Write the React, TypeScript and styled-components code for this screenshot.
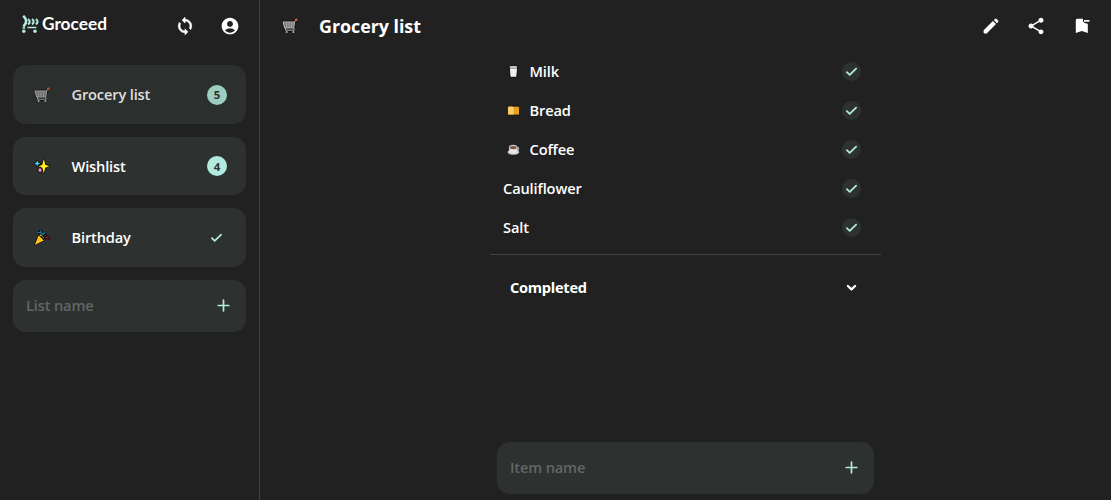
import React from 'react'
import styled, { createGlobalStyle } from 'styled-components'
import { MdAccountCircle, MdShare } from 'react-icons/md'

interface ListEntry {
  key: string
  text: string
  icon: React.ReactNode
  count?: number
  active?: boolean
}

interface ItemEntry {
  key: string
  text: string
  icon?: React.ReactNode
}

const mint = '#b2ebde'
const surface = '#2d3230'

const GlobalStyle = createGlobalStyle`
  * {
    box-sizing: border-box;
  }

  body {
    margin: 0;
    background: #212121;
    color: #fff;
    font-family: 'Open Sans', 'Noto Sans', sans-serif;
    font-size: 14.625px;
    font-weight: 600;
    overflow: hidden;
  }

  svg {
    display: block;
    flex-shrink: 0;
  }
`

const Page = styled.div`
  display: flex;
  height: 100vh;
`

const Sidebar = styled.aside`
  width: 260px;
  flex-shrink: 0;
  border-right: 1px solid #424242;
`

const SideHeader = styled.header`
  display: flex;
  align-items: center;
  height: 52px;
  padding: 0 19px 0 22px;
`

const Logo = styled.div`
  display: flex;
  align-items: center;
  flex: 1;
  gap: 3px;
  padding-bottom: 4px;
`

const LogoText = styled.span`
  font-family: Lato, sans-serif;
  font-size: 17.3px;
  font-weight: 700;
  line-height: 22px;
`

const Actions = styled.div`
  display: flex;
  align-items: center;
  gap: 25.5px;
`

const IconButton = styled.button`
  display: flex;
  padding: 0;
  border: 0;
  background: none;
  color: #fff;
  font-size: 20px;
`

const SideContent = styled.nav`
  display: flex;
  flex-direction: column;
  gap: 13px;
  padding: 13.3px 13px;
`

const ListCard = styled.div<{ $active?: boolean }>`
  display: flex;
  align-items: center;
  height: 58.5px;
  padding: 0 19px 0 21px;
  border-radius: 13px;
  background: ${surface};
  opacity: ${({ $active }) => ($active ? 0.85 : 1)};
`

const ListIcon = styled.span`
  display: flex;
  width: 16px;
`

const ListName = styled.span`
  flex: 1;
  margin-left: 21.5px;
  padding-bottom: 1px;
  letter-spacing: -0.15px;
`

const Badge = styled.span`
  display: flex;
  align-items: center;
  justify-content: center;
  width: 20px;
  height: 20px;
  border-radius: 50%;
  background: ${mint};
  color: #2d3231;
  font-size: 11.4px;
  font-weight: 700;
`

const DoneMark = styled.span`
  display: flex;
  justify-content: center;
  width: 21px;
`

const AddField = styled.label`
  display: flex;
  align-items: center;
  height: 52px;
  padding: 0 16px 0 13px;
  border-radius: 13px;
  background: ${surface};

  input {
    flex: 1;
    min-width: 0;
    padding: 0 0 1px;
    border: 0;
    outline: 0;
    background: none;
    color: #fff;
    font: inherit;
    letter-spacing: -0.15px;
  }

  input::placeholder {
    color: #646665;
    opacity: 1;
  }
`

const Main = styled.main`
  display: flex;
  flex-direction: column;
  flex: 1;
  align-items: center;
`

const MainHeader = styled.header`
  display: flex;
  align-items: center;
  align-self: stretch;
  height: 52px;
  padding: 0 19.5px 0 21.5px;
`

const Title = styled.h1`
  flex: 1;
  margin: 0 0 0 21.5px;
  font-size: 17.9px;
  font-weight: 700;
  line-height: 24px;
  letter-spacing: -0.05px;
`

const Items = styled.ul`
  width: 391px;
  margin: 0;
  padding: 0 20px 6.5px 13px;
  list-style: none;
  border-bottom: 1px solid #424242;
`

const Item = styled.li`
  display: flex;
  align-items: center;
  height: 39px;
`

const ItemIcon = styled.span`
  display: flex;
  width: 26.5px;
  padding-left: 3.5px;
`

const ItemName = styled.span`
  flex: 1;
  padding-bottom: 1px;
  letter-spacing: -0.13px;
`

const CheckButton = styled.button`
  display: flex;
  align-items: center;
  justify-content: center;
  width: 19.5px;
  height: 19.5px;
  padding: 0;
  border: 0;
  border-radius: 50%;
  background: ${surface};
`

const Completed = styled.div`
  display: flex;
  align-items: center;
  justify-content: space-between;
  width: 391px;
  height: 65px;
  padding: 0 22px 0 20px;
  font-weight: 700;
  letter-spacing: -0.28px;
`

const Footer = styled.footer`
  width: 377px;
  margin-top: auto;
  padding-bottom: 6.5px;
`

const LogoMark = () => (
  <svg width="17" height="18" viewBox="0 0 17 18" fill="none" stroke={mint}>
    <path d="M1.2 .8 Q7 6 1.4 11.6" strokeWidth="2.6" />
    <path d="M.4 13 H3.2" strokeWidth="1.5" />
    <path d="M6 4 Q9.6 6.8 6 9.4 M10 4 Q13.4 6.8 10 9.4 M13.9 4 Q17.3 6.8 13.9 9.4" strokeWidth="2.1" />
    <path d="M5.4 12.5 H14.3" strokeWidth="1.5" />
    <circle cx="1.8" cy="16.2" r="1.7" fill={mint} stroke="none" />
    <circle cx="13" cy="16.2" r="1.7" fill={mint} stroke="none" />
  </svg>
)

const SyncIcon = () => (
  <svg width="20" height="20" viewBox="0 0 24 24" fill="#fff" stroke="#fff" strokeWidth=".8" strokeLinejoin="round">
    <path d="M12 4V1.5L8.5 5l3.5 3.5V6c3.31 0 6 2.69 6 6 0 1.01-.25 1.97-.7 2.8l1.46 1.46A7.93 7.93 0 0 0 20 12c0-4.42-3.58-8-8-8z" />
    <path d="M12 18c-3.31 0-6-2.69-6-6 0-1.01.25-1.97.7-2.8L5.24 7.74A7.93 7.93 0 0 0 4 12c0 4.42 3.58 8 8 8v2.5l3.5-3.5-3.5-3.5V18z" />
  </svg>
)

const CartIcon = () => (
  <svg width="16" height="16" viewBox="0 0 16 16" fill="none" strokeLinejoin="round">
    <path d="M1.2 4 H12 L14.2 2 M2 4 L3 10 H11.5 L12.5 4 M3.5 12.5 H12.5 M4.5 14.2 H5.2 M11 14.2 H11.6" stroke="#0a0a0a" strokeWidth="2.7" />
    <path d="M1.2 4 H12.6 L11.7 10 H2.6 Z" fill="#555" stroke="#c4c4c4" />
    <path d="M1.8 6 H12.2 M2.3 8 H11.9 M4.3 4 L4.8 10 M7 4 V10 M9.8 4 L9.4 10" stroke="#b8b8b8" strokeWidth=".75" />
    <path d="M12.4 5 L13.1 2.8 L14.2 2 M11.7 10 L12.2 12.2 H3.6 V10" stroke="#bdbdbd" />
    <path d="M13.3 2.3 L15.3 1.3" stroke="#e2593f" strokeWidth="2.2" />
    <circle cx="4.7" cy="14" r="1" fill="#bdbdbd" />
    <circle cx="11.4" cy="14" r="1" fill="#bdbdbd" />
  </svg>
)

const SparklesIcon = () => (
  <svg width="16" height="16" viewBox="0 0 16 16" stroke="#080808" strokeWidth="1.4" paintOrder="stroke" strokeLinejoin="round">
    <path d="M9.8 .8 L11.3 6.7 L15.5 8.2 L11.3 9.8 L9.8 15.4 L8.3 9.8 L4.3 8.2 L8.3 6.7 Z" fill="#fff01f" />
    <path d="M3.2 2.3 L4.1 4.6 L6.2 5.5 L4.1 6.4 L3.2 8.6 L2.3 6.4 L.3 5.5 L2.3 4.6 Z" fill="#59c9f5" />
    <path d="M6 9.2 L6.9 11.3 L8.5 12.1 L6.9 13 L6 15.3 L5.1 13 L3.5 12.1 L5.1 11.3 Z" fill="#f48fc0" />
  </svg>
)

const PartyIcon = () => (
  <svg width="17" height="17" viewBox="0 0 17 17" strokeLinejoin="round">
    <path d="M4.6 6.2 L9.9 11.6 L.8 15.9 Z" fill="#fcc21b" stroke="#080808" strokeWidth="1.4" paintOrder="stroke" />
    <path d="M3.5 3.3 L7 3.5 L6.5 1 M7 3.5 L9.2 6 L11.5 3.5 M7.5 5.5 L9.4 8.4" fill="none" stroke="#080808" strokeWidth="3.2" />
    <path d="M3.3 3.4 L7 3.7 L6.5 1.3 M7 3.7 L8.8 5.5 L11.3 3.3" fill="none" stroke="#167da8" strokeWidth="1.3" />
    <path d="M10.2 9.2 L12.8 6.4 L15.5 8.4 L15.7 10.2 L12.8 9.8 Z" fill="#981414" stroke="#080808" strokeWidth=".8" />
    <path d="M8.2 7 L9.8 9" stroke="#4b9b36" strokeWidth="1.2" />
    <circle cx="6.9" cy="6.3" r=".9" fill="#e6c12c" />
  </svg>
)

const MilkIcon = () => (
  <svg width="13" height="13" viewBox="0 0 13 13">
    <path d="M2.1 .7 H10.7 L9.6 12.4 H3.2 Z" fill="#a7a7a7" stroke="#111" />
    <path d="M3 4 H9.8 L9.1 11.6 H3.8 Z" fill="#eee" />
    <ellipse cx="6.4" cy="1.9" rx="3.6" ry=".8" fill="#cbcbcb" />
  </svg>
)

const BreadIcon = () => (
  <svg width="13" height="13" viewBox="0 0 13 13">
    <path d="M.6 3.2 Q.6 2.2 2 2.2 H11 Q12.6 2.2 12.5 3.8 V11 H.8 Z" fill="#eaa01f" stroke="#17120b" strokeWidth=".8" />
    <path d="M1 3.2 Q1.4 2.6 3 2.6 Q6.5 2.3 6.6 3.8 V10.6 H1.2 Z" fill="#f8cd69" />
  </svg>
)

const CoffeeIcon = () => (
  <svg width="13" height="13" viewBox="0 0 13 13">
    <ellipse cx="6.4" cy="9.1" rx="6.1" ry="3" fill="#d8d8d8" stroke="#111" strokeWidth=".6" />
    <path d="M10 4.8 H11.4 V7 H9" fill="none" stroke="#c9c9c9" strokeWidth="1.1" />
    <path d="M1.9 4.4 Q1.9 10 6.2 10 Q10.5 10 10.5 4.4 Z" fill="#e8e8e8" />
    <ellipse cx="6.2" cy="4.3" rx="4.3" ry="2.5" fill="#c7c7c7" />
    <ellipse cx="6.2" cy="4.5" rx="3.4" ry="1.6" fill="#80543f" />
  </svg>
)

const CheckIcon = () => (
  <svg width="13" height="13" viewBox="0 0 13 13" fill="none" stroke={mint} strokeWidth="1.8" strokeLinecap="round" strokeLinejoin="round">
    <path d="M1.9 7.1 L4.7 9.8 L11.1 3.7" />
  </svg>
)

const PlusIcon = () => (
  <svg width="13" height="13" viewBox="0 0 13 13" stroke={mint} strokeWidth="1.7" strokeLinecap="round">
    <path d="M6.5 1.2 V11.8 M1.2 6.5 H11.8" />
  </svg>
)

const ChevronIcon = () => (
  <svg width="15" height="15" viewBox="0 0 15 15" fill="none" stroke="#fff" strokeWidth="2.3" strokeLinecap="round" strokeLinejoin="round">
    <path d="M3.9 6 L7.5 9.3 L11.1 6" />
  </svg>
)

const PencilIcon = () => (
  <svg width="20" height="20" viewBox="0 0 20 20" fill="#fff">
    <path d="M2.6 14.3 L11.9 5 L15 8.1 L5.7 17.4 H3.4 Q2.6 17.4 2.6 16.6 Z" />
    <path d="M12.8 4.1 L14 2.9 Q14.8 2.2 15.6 2.9 L17.1 4.4 Q17.8 5.2 17.1 6 L15.9 7.2 Z" />
  </svg>
)

const BookmarkRemoveIcon = () => (
  <svg width="20" height="20" viewBox="0 0 20 20" fill="#fff">
    <path d="M3.8 4.2 Q3.8 2.7 5.3 2.7 H10.9 Q10.1 7.2 15.8 7.8 V17 L9.8 15 L3.8 17 Z" />
    <path d="M12 4 H17.5 V5.7 H12 Z" />
  </svg>
)

const lists: ListEntry[] = [
  { key: 'grocery', text: 'Grocery list', icon: <CartIcon />, count: 5, active: true },
  { key: 'wishlist', text: 'Wishlist', icon: <SparklesIcon />, count: 4 },
  { key: 'birthday', text: 'Birthday', icon: <PartyIcon /> }
]

const items: ItemEntry[] = [
  { key: 'milk', text: 'Milk', icon: <MilkIcon /> },
  { key: 'bread', text: 'Bread', icon: <BreadIcon /> },
  { key: 'coffee', text: 'Coffee', icon: <CoffeeIcon /> },
  { key: 'cauliflower', text: 'Cauliflower' },
  { key: 'salt', text: 'Salt' }
]

const App = () => (
  <>
    <GlobalStyle />
    <Page>
      <Sidebar>
        <SideHeader>
          <Logo>
            <LogoMark />
            <LogoText>Groceed</LogoText>
          </Logo>
          <Actions>
            <IconButton aria-label="Sync">
              <SyncIcon />
            </IconButton>
            <IconButton aria-label="Account">
              <MdAccountCircle />
            </IconButton>
          </Actions>
        </SideHeader>
        <SideContent>
          {lists.map(({ key, text, icon, count, active }) => (
            <ListCard key={key} $active={active}>
              <ListIcon>{icon}</ListIcon>
              <ListName>{text}</ListName>
              {count ? (
                <Badge>{count}</Badge>
              ) : (
                <DoneMark>
                  <CheckIcon />
                </DoneMark>
              )}
            </ListCard>
          ))}
          <AddField>
            <input placeholder="List name" />
            <PlusIcon />
          </AddField>
        </SideContent>
      </Sidebar>
      <Main>
        <MainHeader>
          <CartIcon />
          <Title>Grocery list</Title>
          <Actions>
            <IconButton aria-label="Edit">
              <PencilIcon />
            </IconButton>
            <IconButton aria-label="Share">
              <MdShare />
            </IconButton>
            <IconButton aria-label="Remove">
              <BookmarkRemoveIcon />
            </IconButton>
          </Actions>
        </MainHeader>
        <Items>
          {items.map(({ key, text, icon }) => (
            <Item key={key}>
              {icon && <ItemIcon>{icon}</ItemIcon>}
              <ItemName>{text}</ItemName>
              <CheckButton aria-label={`Complete ${text}`}>
                <CheckIcon />
              </CheckButton>
            </Item>
          ))}
        </Items>
        <Completed>
          <span>Completed</span>
          <ChevronIcon />
        </Completed>
        <Footer>
          <AddField>
            <input placeholder="Item name" />
            <PlusIcon />
          </AddField>
        </Footer>
      </Main>
    </Page>
  </>
)

export default App
